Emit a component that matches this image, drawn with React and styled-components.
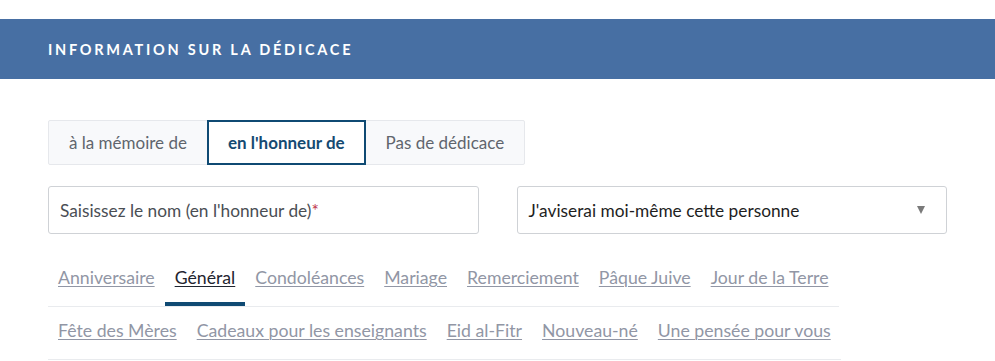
import React from "react";
import styled, { createGlobalStyle } from "styled-components";

const Global = createGlobalStyle`
  html, body { margin: 0; padding: 0; background: #fff; }
  body { font-family: Lato, "Open Sans", sans-serif; color: #333; }
  * { box-sizing: border-box; }
`;

const Page = styled.div`
  padding-top: 19px;
  width: 995px;
`;

const Header = styled.div`
  height: 60px;
  background: #476fa3;
  display: flex;
  align-items: center;
  padding-left: 48px;
  color: #fff;
  font-weight: 700;
  font-size: 14.5px;
  letter-spacing: 2.75px;
  text-transform: uppercase;
`;

const Body = styled.div`
  padding: 41px 48px 0;
  display: flex;
  flex-direction: column;
`;

const Segmented = styled.div`
  display: inline-flex;
  align-self: flex-start;
  height: 45px;
  background: #f8f9fb;
  border: 1px solid #e6e8ec;
  border-radius: 2px;
`;

const Segment = styled.button`
  font-family: inherit;
  font-size: 17px;
  background: ${(p) => (p.$active ? "#fff" : "transparent")};
  color: ${(p) => (p.$active ? "#154a72" : "#60656d")};
  font-weight: ${(p) => (p.$active ? 700 : 400)};
  border: ${(p) => (p.$active ? "2px solid #0f4a73" : "none")};
  margin: ${(p) => (p.$active ? "-1px 0" : "0")};
  padding: 0 ${(p) => (p.$active ? "19px" : "20px")};
  cursor: pointer;
`;

const Fields = styled.div`
  margin-top: 21px;
  display: grid;
  grid-template-columns: 1fr 1fr;
  gap: 38px;
`;

const Field = styled.div`
  position: relative;
  height: 48px;
  border: 1px solid #cfd2d6;
  border-radius: 3px;
  background: #fff;
  display: flex;
  align-items: center;
  padding: 0 11px;
  font-size: 17.3px;
  color: ${(p) => (p.$muted ? "#4a4e54" : "#1e1e1e")};
`;

const Req = styled.span`
  color: #c0344a;
`;

const Arrow = styled.span`
  margin-left: auto;
  width: 0;
  height: 0;
  border-left: 4.5px solid transparent;
  border-right: 4.5px solid transparent;
  border-top: 8px solid #7a7a7a;
  margin-right: 10px;
`;

const Tabs = styled.div`
  margin-top: 20px;
  display: flex;
  flex-wrap: wrap;
  max-width: 899px;
`;

const Tab = styled.a`
  position: relative;
  display: block;
  padding: 12px 10px 16px;
  line-height: 24px;
  font-size: 17.7px;
  border-bottom: 1px solid #e9ebee;
  color: ${(p) => (p.$active ? "#1f2530" : "#9196a5")};
  text-decoration: underline;
  text-underline-offset: 2px;
  text-decoration-thickness: 1px;
  cursor: pointer;
  &::after {
    content: "";
    display: ${(p) => (p.$active ? "block" : "none")};
    position: absolute;
    left: 0;
    right: 0;
    bottom: 0;
    height: 4px;
    background: #0f4a73;
  }
`;

const cats = [
  "Anniversaire",
  "Général",
  "Condoléances",
  "Mariage",
  "Remerciement",
  "Pâque Juive",
  "Jour de la Terre",
  "Fête des Mères",
  "Cadeaux pour les enseignants",
  "Eid al-Fitr",
  "Nouveau-né",
  "Une pensée pour vous",
];

export default function App() {
  return (
    <Page>
      <Global />
      <Header>Information sur la dédicace</Header>
      <Body>
        <Segmented>
          <Segment>à la mémoire de</Segment>
          <Segment $active>en l'honneur de</Segment>
          <Segment>Pas de dédicace</Segment>
        </Segmented>
        <Fields>
          <Field $muted>
            Saisissez le nom (en l'honneur de)<Req>*</Req>
          </Field>
          <Field>
            J'aviserai moi-même cette personne
            <Arrow />
          </Field>
        </Fields>
        <Tabs>
          {cats.map((c) => (
            <Tab key={c} $active={c === "Général"}>
              {c}
            </Tab>
          ))}
        </Tabs>
      </Body>
    </Page>
  );
}
